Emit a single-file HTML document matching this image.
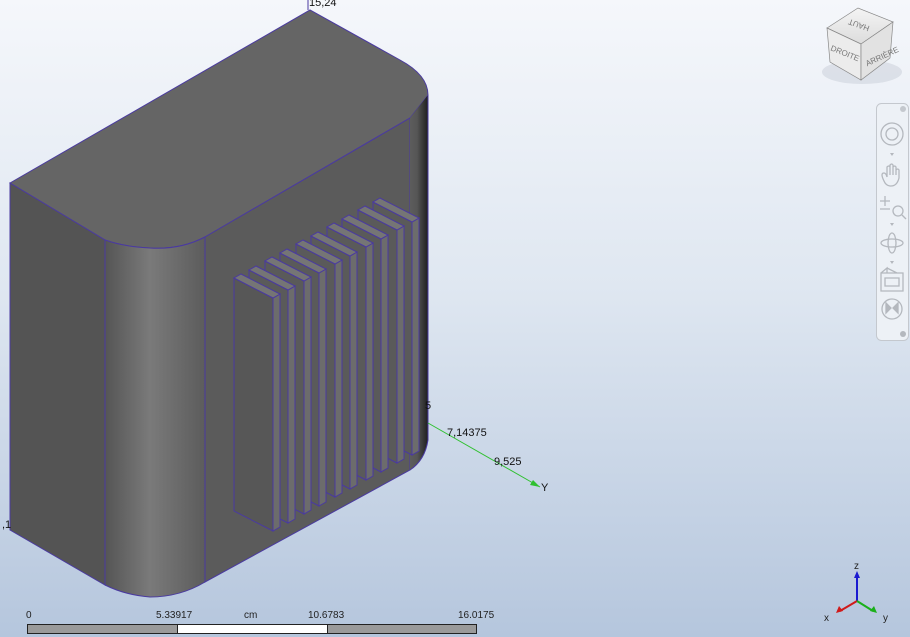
<!DOCTYPE html>
<html><head><meta charset="utf-8"><style>
html,body{margin:0;padding:0;width:910px;height:637px;overflow:hidden}
body{background:linear-gradient(#f5f7fb 0%,#dfe7f1 45%,#b5c6dd 100%);font-family:"Liberation Sans",sans-serif}
svg{position:absolute;left:0;top:0}
</style></head><body>
<svg width="910" height="637" viewBox="0 0 910 637" font-family="Liberation Sans, sans-serif">
<defs>
<linearGradient id="cyl" x1="0" x2="1"><stop offset="0" stop-color="#555"/><stop offset="0.45" stop-color="#7a7a7a"/><stop offset="1" stop-color="#5c5c5c"/></linearGradient>
<linearGradient id="cyl2" x1="0" x2="1"><stop offset="0" stop-color="#5d5d5d"/><stop offset="0.4" stop-color="#555"/><stop offset="1" stop-color="#1e1e1e"/></linearGradient>
<linearGradient id="cube" x1="0" y1="0" x2="0" y2="1"><stop offset="0" stop-color="#f4f4f4"/><stop offset="1" stop-color="#dcdcdc"/></linearGradient>
</defs>
<path d="M10 183 L310 10 L400 60 Q428 75 428 95 L410 118 L205 237 Q180 250 150 248 Q125 247 105 240 Z" fill="#656565" stroke="#4a3aa0" stroke-width="1"/>
<path d="M10 183 L105 240 L105 585 L10 530 Z" fill="#545454" stroke="#4a3aa0" stroke-width="1"/>
<path d="M105 240 Q125 247 150 248 Q180 250 205 237 L205 582 Q180 597 150 597 Q125 595 105 585 Z" fill="url(#cyl)" stroke="#4a3aa0" stroke-width="1"/>
<path d="M205 237 L410 118 L410 470 L205 582 Z" fill="#5b5b5b" stroke="#4a3aa0" stroke-width="1"/>
<path d="M410 118 L428 95 L428 440 Q425 460 410 470 Z" fill="url(#cyl2)"/>
<path d="M428 95 L428 440 Q425 460 410 470" fill="none" stroke="#4a3aa0" stroke-width="1"/>
<g stroke="#4a3aa0" stroke-width="1">
<path d="M373 202 l39 20 l0 233 l-39 -20 Z" fill="#5a5a5a"/><path d="M412 222 l7 -4 l0 233 l-7 4 Z" fill="#6c6c6c"/><path d="M373 202 l7 -4 l39 20 l-7 4 Z" fill="#757575"/>
<path d="M358 210 l39 20 l0 233 l-39 -20 Z" fill="#5a5a5a"/><path d="M397 230 l7 -4 l0 233 l-7 4 Z" fill="#6c6c6c"/><path d="M358 210 l7 -4 l39 20 l-7 4 Z" fill="#757575"/>
<path d="M342 219 l39 20 l0 233 l-39 -20 Z" fill="#5a5a5a"/><path d="M381 239 l7 -4 l0 233 l-7 4 Z" fill="#6c6c6c"/><path d="M342 219 l7 -4 l39 20 l-7 4 Z" fill="#757575"/>
<path d="M327 227 l39 20 l0 233 l-39 -20 Z" fill="#5a5a5a"/><path d="M366 247 l7 -4 l0 233 l-7 4 Z" fill="#6c6c6c"/><path d="M327 227 l7 -4 l39 20 l-7 4 Z" fill="#757575"/>
<path d="M311 236 l39 20 l0 233 l-39 -20 Z" fill="#5a5a5a"/><path d="M350 256 l7 -4 l0 233 l-7 4 Z" fill="#6c6c6c"/><path d="M311 236 l7 -4 l39 20 l-7 4 Z" fill="#757575"/>
<path d="M296 244 l39 20 l0 233 l-39 -20 Z" fill="#5a5a5a"/><path d="M335 264 l7 -4 l0 233 l-7 4 Z" fill="#6c6c6c"/><path d="M296 244 l7 -4 l39 20 l-7 4 Z" fill="#757575"/>
<path d="M280 253 l39 20 l0 233 l-39 -20 Z" fill="#5a5a5a"/><path d="M319 273 l7 -4 l0 233 l-7 4 Z" fill="#6c6c6c"/><path d="M280 253 l7 -4 l39 20 l-7 4 Z" fill="#757575"/>
<path d="M265 261 l39 20 l0 233 l-39 -20 Z" fill="#5a5a5a"/><path d="M304 281 l7 -4 l0 233 l-7 4 Z" fill="#6c6c6c"/><path d="M265 261 l7 -4 l39 20 l-7 4 Z" fill="#757575"/>
<path d="M249 270 l39 20 l0 233 l-39 -20 Z" fill="#5a5a5a"/><path d="M288 290 l7 -4 l0 233 l-7 4 Z" fill="#6c6c6c"/><path d="M249 270 l7 -4 l39 20 l-7 4 Z" fill="#757575"/>
<path d="M234 278 l39 20 l0 233 l-39 -20 Z" fill="#575757"/><path d="M273 298 l7 -4 l0 233 l-7 4 Z" fill="#6c6c6c"/><path d="M234 278 l7 -4 l39 20 l-7 4 Z" fill="#757575"/>
</g>
<line x1="308" y1="0" x2="308" y2="10" stroke="#4a3aa0"/>
<line x1="428" y1="423" x2="540" y2="487" stroke="#2fc02f" stroke-width="1"/>
<path d="M540 487 l-10 -2 l3 -5 Z" fill="#2fc02f"/>
<g font-size="11" fill="#111">
<text x="309" y="6">15,24</text>
<text x="425" y="409">5</text>
<text x="447" y="436">7,14375</text>
<text x="494" y="465">9,525</text>
<text x="541" y="491">Y</text>
<text x="2" y="528">,1</text>
</g>
<rect x="27.5" y="624.5" width="449" height="9" fill="#9a9a9a" stroke="#222"/>
<rect x="178" y="625" width="149" height="8" fill="#fff"/>
<line x1="177.5" y1="624" x2="177.5" y2="634" stroke="#222"/><line x1="327.5" y1="624" x2="327.5" y2="634" stroke="#222"/>
<g font-size="10" fill="#222">
<text x="26" y="618">0</text><text x="156" y="618">5.33917</text><text x="244" y="618">cm</text><text x="308" y="618">10.6783</text><text x="458" y="618">16.0175</text>
</g>
<line x1="857" y1="601" x2="857" y2="575" stroke="#1a1ad0" stroke-width="2"/><path d="M854 578 l3 -7 l3 7 Z" fill="#1a1ad0"/>
<line x1="857" y1="601" x2="840" y2="611" stroke="#d01a1a" stroke-width="2"/><path d="M836 613 l3 -7 l4 5 Z" fill="#d01a1a"/>
<line x1="857" y1="601" x2="873" y2="611" stroke="#1ab01a" stroke-width="2"/><path d="M877 613 l-7 -2 l4 -5 Z" fill="#1ab01a"/>
<g font-size="10" fill="#222"><text x="854" y="569">z</text><text x="824" y="621">x</text><text x="883" y="621">y</text></g>
<ellipse cx="862" cy="72" rx="40" ry="12" fill="#c8ced8" opacity="0.5"/>
<path d="M827 28 L858 8 L893 22 L861 44 Z" fill="url(#cube)" stroke="#888" stroke-width="0.7"/>
<path d="M827 28 L861 44 L861 80 L830 62 Z" fill="#ececec" stroke="#888" stroke-width="0.7"/>
<path d="M861 44 L893 22 L890 58 L861 80 Z" fill="#e2e2e2" stroke="#888" stroke-width="0.7"/>
<g font-size="8" fill="#777"><text x="846" y="26" transform="rotate(200 858 24)">HAUT</text><text x="830" y="54" transform="rotate(22 840 52)">DROITE</text><text x="863" y="62" transform="rotate(-25 875 55)">ARRIÈRE</text></g>
<rect x="876.5" y="103.5" width="32" height="237" rx="5" fill="#edf1f6" stroke="#c4c8ce"/>
<g fill="none" stroke="#b4b8be" stroke-width="1.3">
<circle cx="903" cy="109" r="3" fill="#c4c8ce" stroke="none"/>
<circle cx="892" cy="134" r="11"/><circle cx="892" cy="134" r="6"/>
<path d="M884 181 q-4 -8 0 -8 q2 0 3 4 l0 -10 q2 -2 3 0 l0 8 l0 -10 q2 -2 3 0 l0 10 l0 -8 q2 -2 3 0 l0 8 l0 -5 q2 -2 3 0 l0 8 q-2 8 -8 8 q-5 0 -7 -5"/>
<path d="M880 201 h10 M885 196 v10 M880 209 h10"/><circle cx="898" cy="211" r="5"/><path d="M902 215 l4 4"/>
<ellipse cx="892" cy="243" rx="11" ry="4"/><ellipse cx="892" cy="243" rx="4" ry="10"/>
<path d="M881 273 v18 h22 v-18 Z M885 278 h14 v8 h-14 Z M881 273 l6 -5 v5 M887 268 l10 5"/>
<circle cx="892" cy="309" r="10"/><path d="M886 303 l5 5 l-5 5 Z M898 303 l-5 5 l5 5 Z" fill="#b4b8be"/>
</g>
<g fill="#b4b8be"><path d="M890 153 h4 l-2 3 Z M890 223 h4 l-2 3 Z M890 261 h4 l-2 3 Z"/><circle cx="903" cy="334" r="3"/></g>
</svg>
</body></html>
